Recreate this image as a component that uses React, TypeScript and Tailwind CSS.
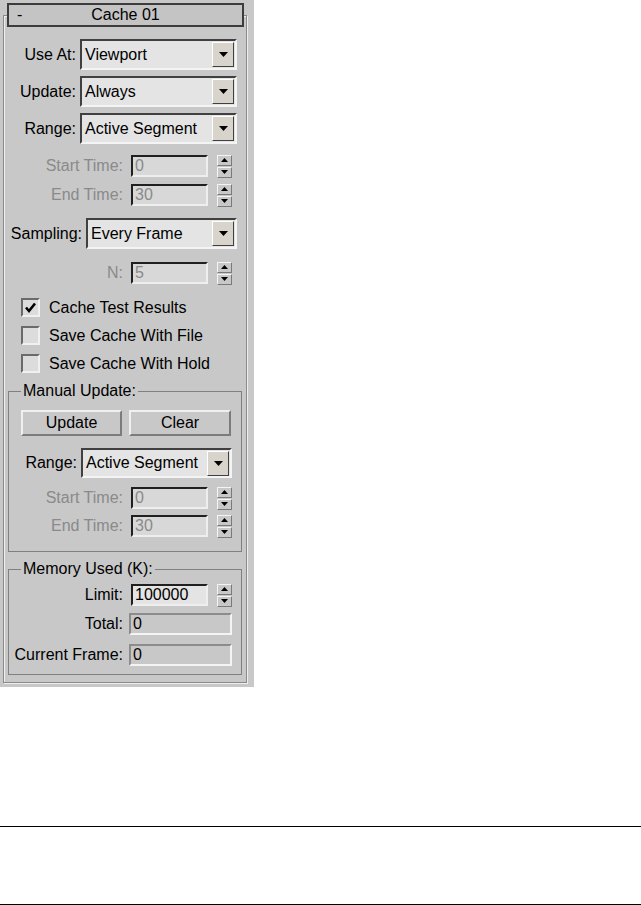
import React from "react";

const Arrow = () => (
  <svg width="9" height="5" viewBox="0 0 9 5">
    <polygon points="0,0 9,0 4.5,5" fill="#000" />
  </svg>
);

const Dropdown = ({ value, w, h }: { value: string; w: string; h: string }) => (
  <div
    className={`flex ${w} ${h} items-center border-2 border-t-[#404040] border-l-[#404040] border-b-[#f4f4f4] border-r-[#f4f4f4] bg-[#e4e4e4] pr-[1px]`}
  >
    <span className="flex-1 pl-[3px]">{value}</span>
    <div className="flex h-[25px] w-[22px] items-center justify-center border border-t-[#ffffff] border-l-[#ffffff] border-b-[#404040] border-r-[#404040] bg-[#d8d4cc]">
      <Arrow />
    </div>
  </div>
);

const Spinner = () => (
  <div className="ml-[9px] flex h-[23px] w-[15px] flex-col gap-[1px]">
    <div className="flex h-[11px] items-center justify-center border border-t-[#f4f4f4] border-l-[#f4f4f4] border-b-[#7a7a7a] border-r-[#7a7a7a] bg-[#c8c8c8]">
      <svg width="7" height="4" viewBox="0 0 7 4">
        <polygon points="0,4 7,4 3.5,0" fill="#000" />
      </svg>
    </div>
    <div className="flex h-[11px] items-center justify-center border border-t-[#f4f4f4] border-l-[#f4f4f4] border-b-[#7a7a7a] border-r-[#7a7a7a] bg-[#c8c8c8]">
      <svg width="7" height="4" viewBox="0 0 7 4">
        <polygon points="0,0 7,0 3.5,4" fill="#000" />
      </svg>
    </div>
  </div>
);

const SpinField = ({ value, disabled, ml }: { value: string; disabled?: boolean; ml: string }) => (
  <div
    className={`${ml} flex h-[22px] w-[77px] items-center border-2 border-t-[#202020] border-l-[#202020] border-b-[#eeeeee] border-r-[#eeeeee] pl-[2px] ${
      disabled ? "bg-[#d8d8d8] text-[#8a8a8a]" : "bg-[#e4e4e4] text-black"
    }`}
  >
    {value}
  </div>
);

const Field = ({ value }: { value: string }) => (
  <div className="ml-[6px] flex h-[22px] w-[103px] items-center border-2 border-t-[#8c8c8c] border-l-[#8c8c8c] border-b-[#f4f4f4] border-r-[#f4f4f4] pl-[2px]">
    {value}
  </div>
);

const Check = ({ label, checked }: { label: string; checked?: boolean }) => (
  <div className="flex h-[19px] items-center">
    <div className="ml-[17px] flex h-[19px] w-[19px] items-center justify-center border-2 border-t-[#6a6a6a] border-l-[#6a6a6a] border-b-[#f0f0f0] border-r-[#f0f0f0] bg-[#dcdcdc]">
      {checked && (
        <svg width="13" height="13" viewBox="0 0 13 13">
          <polyline points="2,6.5 5,10 11,2.5" fill="none" stroke="#000" strokeWidth="2.6" />
        </svg>
      )}
    </div>
    <span className="ml-[9px]">{label}</span>
  </div>
);

const Button = ({ label, w, ml }: { label: string; w: string; ml: string }) => (
  <div
    className={`${ml} ${w} flex h-[26px] items-center justify-center border-2 border-t-[#f0f0f0] border-l-[#f0f0f0] border-b-[#7c7c7c] border-r-[#7c7c7c] bg-[#c8c8c8]`}
  >
    {label}
  </div>
);

export default function App() {
  return (
    <div className="min-h-[905px] w-[641px] bg-white font-['Liberation_Sans',Arial,sans-serif] text-[16px] leading-[18px] text-black">
      <div className="flex h-[687px] w-[254px] flex-col bg-[#c8c8c8] pt-[3px]">
        {/* rollout title */}
        <div className="relative z-10 ml-[7px] grid h-[24px] w-[237px] grid-cols-[30px_1fr_30px] items-center border-2 border-[#3c3c3c] bg-[#c4c4c4]">
          <span className="pl-[8px]">-</span>
          <span className="text-center">Cache 01</span>
          <span />
        </div>

        <div className="-mt-[12px] ml-[3px] flex h-[668px] w-[244px] flex-col border border-[#8a8a8a] shadow-[inset_1px_1px_0_#eeeeee,1px_1px_0_#eeeeee]">
          <div className="mt-[23px] flex h-[31px] items-center">
            <div className="w-[72px] text-right">Use At:</div>
            <div className="ml-[4px]">
              <Dropdown value="Viewport" w="w-[157px]" h="h-[31px]" />
            </div>
          </div>
          <div className="mt-[6px] flex h-[31px] items-center">
            <div className="w-[72px] text-right">Update:</div>
            <div className="ml-[4px]">
              <Dropdown value="Always" w="w-[157px]" h="h-[31px]" />
            </div>
          </div>
          <div className="mt-[6px] flex h-[31px] items-center">
            <div className="w-[72px] text-right">Range:</div>
            <div className="ml-[4px]">
              <Dropdown value="Active Segment" w="w-[157px]" h="h-[31px]" />
            </div>
          </div>

          <div className="mt-[11px] flex h-[22px] items-center">
            <div className="w-[119px] text-right text-[#8a8a8a]">Start Time:</div>
            <SpinField value="0" disabled ml="ml-[8px]" />
            <Spinner />
          </div>
          <div className="mt-[7px] flex h-[22px] items-center">
            <div className="w-[119px] text-right text-[#8a8a8a]">End Time:</div>
            <SpinField value="30" disabled ml="ml-[8px]" />
            <Spinner />
          </div>

          <div className="mt-[12px] flex h-[31px] items-center">
            <div className="w-[78px] text-right">Sampling:</div>
            <div className="ml-[4px]">
              <Dropdown value="Every Frame" w="w-[151px]" h="h-[31px]" />
            </div>
          </div>
          <div className="mt-[13px] flex h-[22px] items-center">
            <div className="w-[119px] text-right text-[#8a8a8a]">N:</div>
            <SpinField value="5" disabled ml="ml-[8px]" />
            <Spinner />
          </div>

          <div className="mt-[14px] flex flex-col gap-[9px]">
            <Check label="Cache Test Results" checked />
            <Check label="Save Cache With File" />
            <Check label="Save Cache With Hold" />
          </div>

          <fieldset className="mt-[9px] ml-[4px] w-[234px] border border-[#808080] pb-[14px]">
            <legend className="ml-[12px] px-[2px] leading-[18px]">Manual Update:</legend>
            <div className="mt-[10px] flex">
              <Button label="Update" w="w-[101px]" ml="ml-[12px]" />
              <Button label="Clear" w="w-[102px]" ml="ml-[7px]" />
            </div>
            <div className="mt-[12px] flex h-[30px] items-center">
              <div className="w-[68px] text-right">Range:</div>
              <div className="ml-[4px]">
                <Dropdown value="Active Segment" w="w-[151px]" h="h-[30px]" />
              </div>
            </div>
            <div className="mt-[9px] flex h-[22px] items-center">
              <div className="w-[114px] text-right text-[#8a8a8a]">Start Time:</div>
              <SpinField value="0" disabled ml="ml-[8px]" />
              <Spinner />
            </div>
            <div className="mt-[6px] flex h-[22px] items-center">
              <div className="w-[114px] text-right text-[#8a8a8a]">End Time:</div>
              <SpinField value="30" disabled ml="ml-[8px]" />
              <Spinner />
            </div>
          </fieldset>

          <fieldset className="mt-[8px] ml-[4px] w-[234px] border border-[#808080] pb-[8px]">
            <legend className="ml-[12px] px-[2px] leading-[18px]">Memory Used (K):</legend>
            <div className="mt-[6px] flex h-[22px] items-center">
              <div className="w-[114px] text-right">Limit:</div>
              <SpinField value="100000" ml="ml-[8px]" />
              <Spinner />
            </div>
            <div className="mt-[7px] flex h-[22px] items-center">
              <div className="w-[114px] text-right">Total:</div>
              <Field value="0" />
            </div>
            <div className="mt-[8px] flex h-[23px] items-center">
              <div className="w-[114px] text-right">Current Frame:</div>
              <Field value="0" />
            </div>
          </fieldset>
        </div>
      </div>

      <div className="mt-[139px] h-px w-full bg-black" />
      <div className="mt-[77px] h-px w-full bg-black" />
    </div>
  );
}
